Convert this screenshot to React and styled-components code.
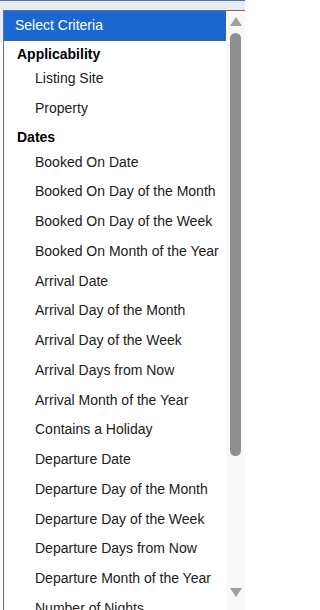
import React from "react";
import styled, { createGlobalStyle } from "styled-components";

const Global = createGlobalStyle`
  html, body { margin: 0; padding: 0; background: #ffffff; }
  body { font-family: "Liberation Sans", Arial, sans-serif; overflow: hidden; }
`;

const Page = styled.div`
  position: relative;
  width: 245px;
  height: 610px;
  overflow: hidden;
  background: #ffffff;
`;

const HeaderBand = styled.div`
  height: 41px;
  border-top: 1px solid #3b73c8;
  background: #e9ebee;
`;

const Listbox = styled.div`
  position: absolute;
  left: 3px;
  top: 10px;
  width: 241px;
  height: 609px;
  display: flex;
  border-left: 1px solid #707070;
  border-top: 1px solid #707070;
  background: #ffffff;
  overflow: hidden;
`;

const List = styled.div`
  flex: 1;
  display: flex;
  flex-direction: column;
  min-width: 0;
  font-size: 14px;
  color: #202020;
`;

const Row = styled.div`
  flex: none;
  white-space: nowrap;
  box-sizing: border-box;
`;

const Placeholder = styled(Row)`
  height: 29.75px;
  line-height: 29.75px;
  padding-left: 11px;
  background: #1a67d2;
  color: #ffffff;
`;

const Group = styled(Row)`
  height: 23.7px;
  padding-top: 3px;
  line-height: 20.7px;
  padding-left: 13px;
  font-weight: bold;
  color: #000000;
`;

const Option = styled(Row)`
  height: 29.75px;
  line-height: 29.75px;
  padding-left: 31px;
`;

const Scrollbar = styled.div`
  flex: none;
  width: 19px;
  display: flex;
  flex-direction: column;
  align-items: center;
  background: #f8f8f8;
`;

const ArrowBox = styled.div`
  flex: none;
  height: 9px;
  margin-top: ${(p) => p.$top}px;
  margin-bottom: ${(p) => p.$bottom}px;
  display: flex;
`;

const Thumb = styled.div`
  flex: none;
  width: 11px;
  height: 423px;
  border-radius: 5.5px;
  background: #8e8e8e;
`;

const Spacer = styled.div`
  flex: 1;
`;

const Arrow = ({ down }) => (
  <svg width="12" height="9" viewBox="0 0 12 9">
    <polygon
      points={down ? "0,0 12,0 6,9" : "6,0 12,9 0,9"}
      fill="#a0a0a0"
    />
  </svg>
);

const groups = [
  { label: "Applicability", items: ["Listing Site", "Property"] },
  {
    label: "Dates",
    items: [
      "Booked On Date",
      "Booked On Day of the Month",
      "Booked On Day of the Week",
      "Booked On Month of the Year",
      "Arrival Date",
      "Arrival Day of the Month",
      "Arrival Day of the Week",
      "Arrival Days from Now",
      "Arrival Month of the Year",
      "Contains a Holiday",
      "Departure Date",
      "Departure Day of the Month",
      "Departure Day of the Week",
      "Departure Days from Now",
      "Departure Month of the Year",
      "Number of Nights",
      "Stay Dates",
    ],
  },
];

export default function App() {
  return (
    <>
      <Global />
      <Page>
        <HeaderBand />
        <Listbox role="listbox">
          <List>
            <Placeholder>Select Criteria</Placeholder>
            {groups.map((g) => (
              <React.Fragment key={g.label}>
                <Group>{g.label}</Group>
                {g.items.map((it) => (
                  <Option key={it}>{it}</Option>
                ))}
              </React.Fragment>
            ))}
          </List>
          <Scrollbar>
            <ArrowBox $top={6} $bottom={7}>
              <Arrow />
            </ArrowBox>
            <Thumb />
            <Spacer />
            <ArrowBox $top={0} $bottom={23}>
              <Arrow down />
            </ArrowBox>
          </Scrollbar>
        </Listbox>
      </Page>
    </>
  );
}
